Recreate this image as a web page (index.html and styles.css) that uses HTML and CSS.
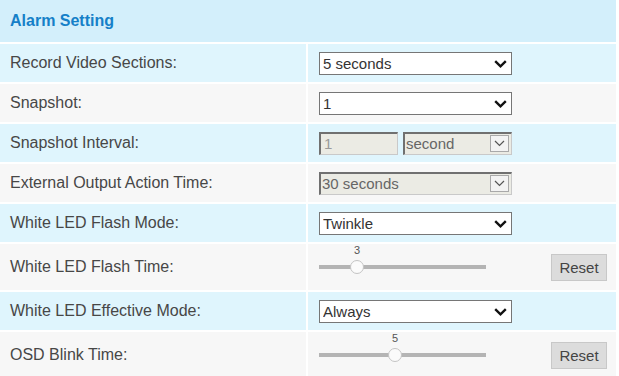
FILE: index.html
```html
<!DOCTYPE html>
<html lang="en">
<head>
    <meta charset="UTF-8">
    <title>Alarm Setting</title>
    <link rel="stylesheet" href="styles.css">
</head>
<body>
    <div class="panel">
        <div class="panel-head">Alarm Setting</div>

        <div class="row row-blue">
            <div class="label">Record Video Sections:</div>
            <div class="value">
                <div class="select-wrap wide">
                    <select><option>5 seconds</option></select>
                    <svg class="arrow" width="13" height="8" viewBox="0 0 13 8"><path d="M1.2 1.2 L6.5 6.3 L11.8 1.2" fill="none" stroke="#111" stroke-width="2.4"/></svg>
                </div>
            </div>
        </div>

        <div class="row row-gray">
            <div class="label">Snapshot:</div>
            <div class="value">
                <div class="select-wrap wide">
                    <select><option>1</option></select>
                    <svg class="arrow" width="13" height="8" viewBox="0 0 13 8"><path d="M1.2 1.2 L6.5 6.3 L11.8 1.2" fill="none" stroke="#111" stroke-width="2.4"/></svg>
                </div>
            </div>
        </div>

        <div class="row row-blue">
            <div class="label">Snapshot Interval:</div>
            <div class="value gap">
                <input class="input-off" type="text" value="1" disabled>
                <div class="select-wrap narrow">
                    <select disabled><option>second</option></select>
                    <span class="arrow-box"><svg width="11" height="7" viewBox="0 0 11 7"><path d="M1 1 L5.5 5.5 L10 1" fill="none" stroke="#555" stroke-width="1.2"/></svg></span>
                </div>
            </div>
        </div>

        <div class="row row-gray">
            <div class="label">External Output Action Time:</div>
            <div class="value">
                <div class="select-wrap wide">
                    <select disabled><option>30 seconds</option></select>
                    <span class="arrow-box"><svg width="11" height="7" viewBox="0 0 11 7"><path d="M1 1 L5.5 5.5 L10 1" fill="none" stroke="#555" stroke-width="1.2"/></svg></span>
                </div>
            </div>
        </div>

        <div class="row row-blue">
            <div class="label">White LED Flash Mode:</div>
            <div class="value">
                <div class="select-wrap wide">
                    <select><option>Twinkle</option></select>
                    <svg class="arrow" width="13" height="8" viewBox="0 0 13 8"><path d="M1.2 1.2 L6.5 6.3 L11.8 1.2" fill="none" stroke="#111" stroke-width="2.4"/></svg>
                </div>
            </div>
        </div>

        <div class="row row-gray tall">
            <div class="label">White LED Flash Time:</div>
            <div class="value">
                <div class="slider">
                    <span class="slider-num" style="left: 38px">3</span>
                    <span class="slider-track"></span>
                    <span class="slider-thumb" style="left: 38px"></span>
                </div>
                <button class="btn-reset">Reset</button>
            </div>
        </div>

        <div class="row row-blue">
            <div class="label">White LED Effective Mode:</div>
            <div class="value">
                <div class="select-wrap wide">
                    <select><option>Always</option></select>
                    <svg class="arrow" width="13" height="8" viewBox="0 0 13 8"><path d="M1.2 1.2 L6.5 6.3 L11.8 1.2" fill="none" stroke="#111" stroke-width="2.4"/></svg>
                </div>
            </div>
        </div>

        <div class="row row-gray tall">
            <div class="label">OSD Blink Time:</div>
            <div class="value">
                <div class="slider">
                    <span class="slider-num" style="left: 76px">5</span>
                    <span class="slider-track"></span>
                    <span class="slider-thumb" style="left: 76px"></span>
                </div>
                <button class="btn-reset">Reset</button>
            </div>
        </div>
    </div>
</body>
</html>
```

FILE: styles.css
```css
body {
    margin: 0;
    padding: 0;
    background: white;
    font-family: 'Liberation Sans', Arial, sans-serif;
}
.panel {
    width: 616px;
    display: flex;
    flex-direction: column;
    gap: 2px;
}
.panel-head {
    height: 42px;
    display: flex;
    align-items: center;
    padding-left: 10px;
    background: #d3effb;
    color: #1580c8;
    font-size: 16px;
    font-weight: bold;
}
.row {
    display: grid;
    grid-template-columns: 306px 1fr;
    column-gap: 2px;
    height: 38px;
}
.row.tall {
    height: 46px;
}
.row-blue .label,
.row-blue .value {
    background: #dff5fd;
}
.row-gray .label,
.row-gray .value {
    background: #f7f7f7;
}
.label {
    display: flex;
    align-items: center;
    padding-left: 10px;
    font-size: 16px;
    color: #474747;
}
.value {
    display: flex;
    align-items: center;
    padding: 0 9px 0 11px;
}
.value.gap {
    gap: 5px;
}
.select-wrap {
    position: relative;
    height: 23px;
}
.select-wrap.wide {
    width: 193px;
}
.select-wrap.narrow {
    width: 109px;
}
.select-wrap select {
    appearance: none;
    -webkit-appearance: none;
    width: 100%;
    height: 23px;
    margin: 0;
    padding: 0 0 0 3px;
    border: 1px solid #767676;
    border-radius: 0;
    background: white;
    font-family: 'Liberation Sans', Arial, sans-serif;
    font-size: 15px;
    color: #333;
}
.select-wrap select:disabled {
    opacity: 1;
    background: #ebebe4;
    color: #666;
    border-color: #707070 #c9c9c9 #c9c9c9 #707070;
    border-width: 2px 1px 1px 2px;
    padding-left: 1px;
}
.arrow {
    position: absolute;
    right: 5px;
    top: 8px;
    pointer-events: none;
}
.arrow-box {
    position: absolute;
    right: 3px;
    top: 3px;
    width: 19px;
    height: 17px;
    box-sizing: border-box;
    border: 1px solid #a9a9a9;
    background: #f3f3f3;
    display: flex;
    align-items: center;
    justify-content: center;
    pointer-events: none;
}
.input-off {
    width: 79px;
    height: 23px;
    box-sizing: border-box;
    margin: 0;
    padding: 0 0 0 3px;
    border-style: solid;
    border-width: 2px 1px 1px 2px;
    border-color: #707070 #c9c9c9 #c9c9c9 #707070;
    background: #ebebe4;
    font-family: 'Liberation Sans', Arial, sans-serif;
    font-size: 15px;
    color: #9a9a9a;
}
.slider {
    position: relative;
    width: 167px;
    height: 46px;
}
.slider-track {
    position: absolute;
    left: 0;
    right: 0;
    top: 21px;
    height: 4px;
    background: #b4b4b4;
}
.slider-num {
    position: absolute;
    top: 0;
    width: 20px;
    margin-left: -10px;
    text-align: center;
    font-size: 11px;
    line-height: 12px;
    color: #555;
}
.slider-thumb {
    position: absolute;
    top: 16px;
    width: 14px;
    height: 14px;
    margin-left: -7px;
    box-sizing: border-box;
    border-radius: 50%;
    border: 1px solid #c4c4c4;
    background: #fbfbfb;
}
.btn-reset {
    margin-left: auto;
    width: 56px;
    height: 27px;
    padding: 0;
    border: 1px solid #c8c8c8;
    border-radius: 0;
    background: #dcdcdc;
    font-family: 'Liberation Sans', Arial, sans-serif;
    font-size: 15px;
    color: #444;
}
```
